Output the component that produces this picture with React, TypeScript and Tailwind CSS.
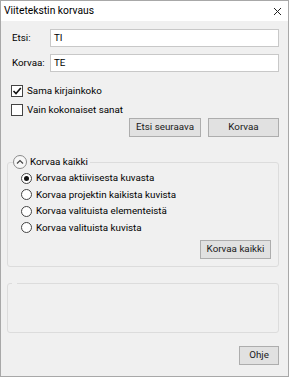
import React from 'react';

const font = { fontFamily: 'Roboto, "Noto Sans", sans-serif' };

function Btn({ label, w }: { label: string; w: string }) {
  return (
    <div className={`${w} h-[19px] border border-[#adadad] bg-[#e1e1e1] flex items-center justify-center text-[9.8px] text-[#1a1a1a]`}>
      {label}
    </div>
  );
}

function Check({ checked, label }: { checked: boolean; label: string }) {
  return (
    <div className="flex items-center h-[13px] ml-[4px]">
      <div className="w-[12px] h-[12px] border border-[#444] bg-white flex items-center justify-center">
        {checked && (
          <svg width="10" height="10" viewBox="0 0 10 10">
            <path d="M1.5 5 L4 7.6 L8.8 2" fill="none" stroke="#111" strokeWidth="1.6" />
          </svg>
        )}
      </div>
      <span className="ml-[4px] text-[9.8px] leading-none">{label}</span>
    </div>
  );
}

function Radio({ checked, label }: { checked: boolean; label: string }) {
  return (
    <div className="flex items-center h-[16.5px]">
      <div className="w-[11px] h-[11px] rounded-full border border-[#444] bg-white flex items-center justify-center">
        {checked && <div className="w-[5px] h-[5px] rounded-full bg-[#111]" />}
      </div>
      <span className="ml-[4px] text-[9.8px] leading-none">{label}</span>
    </div>
  );
}

export default function App() {
  return (
    <div style={font} className="w-[289px] h-[377px] border border-[#a8a8a8] bg-[#f0f0f0] flex flex-col text-[#000]">
      {/* title bar */}
      <div className="h-[20px] bg-white flex items-center justify-between pl-[3px] pr-[6px]">
        <span className="text-[10.3px]">Viitetekstin korvaus</span>
        <svg width="9" height="9" viewBox="0 0 9 9">
          <path d="M1 1 L8 8 M8 1 L1 8" stroke="#222" strokeWidth="1" />
        </svg>
      </div>

      <div className="flex-1 flex flex-col pl-[6px] pr-[9px]">
        <div className="flex items-center mt-[8px]">
          <span className="w-[43px] pl-[5px] text-[9.8px]">Etsi:</span>
          <div className="flex-1 h-[18px] border border-[#c8c8c8] bg-white flex items-center px-[3px] text-[9.8px]">TI</div>
        </div>
        <div className="flex items-center mt-[7px]">
          <span className="w-[43px] pl-[5px] text-[9.8px]">Korvaa:</span>
          <div className="flex-1 h-[18px] border border-[#c8c8c8] bg-white flex items-center px-[3px] text-[9.8px]">TE</div>
        </div>

        <div className="mt-[12px]">
          <Check checked label="Sama kirjainkoko" />
        </div>
        <div className="mt-[6px]">
          <Check checked={false} label="Vain kokonaiset sanat" />
        </div>

        <div className="flex justify-end gap-[7px] mt-[2px]">
          <Btn label="Etsi seuraava" w="w-[72px]" />
          <Btn label="Korvaa" w="w-[71px]" />
        </div>

        {/* Korvaa kaikki group */}
        <div className="relative mt-[25px] h-[105px] border border-[#dcdcdc] rounded-[3px] flex flex-col">
          <div className="absolute -top-[8px] left-[5px] flex items-center bg-[#f0f0f0] pr-[2px]">
            <div className="w-[14px] h-[14px] rounded-full border border-[#8a8a8a] bg-[#f7f7f7] flex items-center justify-center">
              <svg width="8" height="6" viewBox="0 0 8 6">
                <path d="M1 4.5 L4 1.5 L7 4.5" fill="none" stroke="#444" strokeWidth="1.2" />
              </svg>
            </div>
            <span className="ml-[3px] text-[9.8px] leading-none">Korvaa kaikki</span>
          </div>
          <div className="flex flex-col pl-[13px] pt-[7px]">
            <Radio checked label="Korvaa aktiivisesta kuvasta" />
            <Radio checked={false} label="Korvaa projektin kaikista kuvista" />
            <Radio checked={false} label="Korvaa valituista elementeistä" />
            <Radio checked={false} label="Korvaa valituista kuvista" />
          </div>
          <div className="flex justify-end pr-[7px] mt-[4px]">
            <Btn label="Korvaa kaikki" w="w-[71px]" />
          </div>
        </div>

        {/* empty group */}
        <div className="relative mt-[16px] h-[50px] border border-[#dcdcdc] rounded-[3px]">
          <div className="absolute -top-[1px] left-[4px] w-[5px] h-[1px] bg-[#f0f0f0]" />
        </div>

        <div className="flex justify-end mt-[13px]">
          <Btn label="Ohje" w="w-[40px]" />
        </div>
      </div>
    </div>
  );
}
